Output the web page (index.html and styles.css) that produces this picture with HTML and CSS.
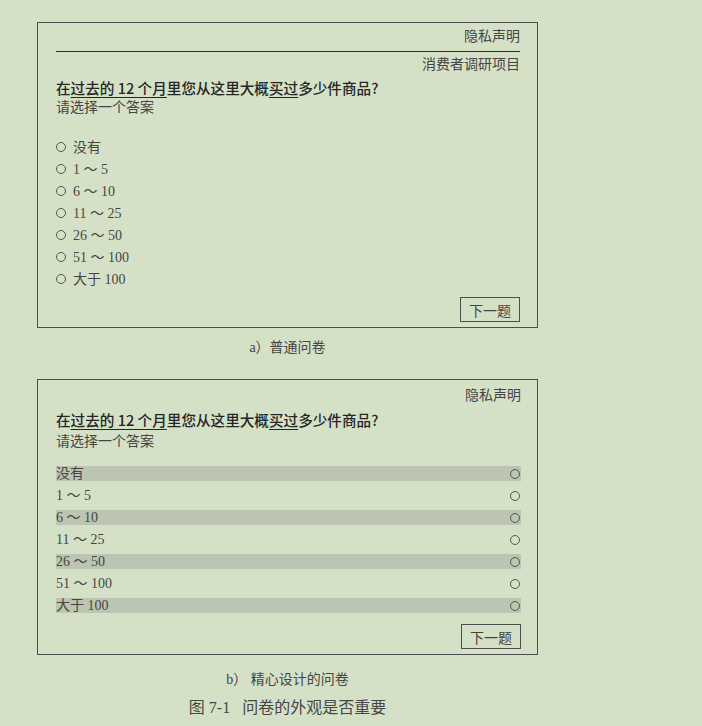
FILE: index.html
```html
<!DOCTYPE html>
<html lang="zh-CN">
<head>
<meta charset="utf-8">
<title>问卷的外观是否重要</title>
<link rel="stylesheet" href="styles.css">
</head>
<body>
<main class="page">
  <section class="survey survey-a">
    <div class="privacy">隐私声明</div>
    <div class="rule"></div>
    <div class="project">消费者调研项目</div>
    <div class="question">在<span class="ul">过去的 12 个月</span>里您从这里大概<span class="ul">买过</span>多少件商品?</div>
    <div class="hint">请选择一个答案</div>
    <ul class="options">
      <li><span class="radio"></span>没有</li>
      <li><span class="radio"></span>1 ～ 5</li>
      <li><span class="radio"></span>6 ～ 10</li>
      <li><span class="radio"></span>11 ～ 25</li>
      <li><span class="radio"></span>26 ～ 50</li>
      <li><span class="radio"></span>51 ～ 100</li>
      <li><span class="radio"></span>大于 100</li>
    </ul>
    <div class="actions"><span class="next">下一题</span></div>
  </section>
  <p class="caption caption-a">a）普通问卷</p>

  <section class="survey survey-b">
    <div class="privacy">隐私声明</div>
    <div class="question">在<span class="ul">过去的 12 个月</span>里您从这里大概<span class="ul">买过</span>多少件商品?</div>
    <div class="hint hint-b">请选择一个答案</div>
    <ul class="rows">
      <li class="band"><span>没有</span><span class="radio"></span></li>
      <li><span>1 ～ 5</span><span class="radio"></span></li>
      <li class="band"><span>6 ～ 10</span><span class="radio"></span></li>
      <li><span>11 ～ 25</span><span class="radio"></span></li>
      <li class="band"><span>26 ～ 50</span><span class="radio"></span></li>
      <li><span>51 ～ 100</span><span class="radio"></span></li>
      <li class="band"><span>大于 100</span><span class="radio"></span></li>
    </ul>
    <div class="actions actions-b"><span class="next">下一题</span></div>
  </section>
  <p class="caption caption-b">b）&nbsp;精心设计的问卷</p>
  <p class="figcap">图 7-1&nbsp;&nbsp;&nbsp;问卷的外观是否重要</p>
</main>
</body>
</html>
```

FILE: styles.css
```css
html, body {
  margin: 0;
  padding: 0;
  background: #d5e1c7;
}

body {
  font-family: "Liberation Serif", "Noto Sans CJK SC", serif;
  font-size: 14px;
  color: #454545;
}

.page {
  width: 501px;
  padding: 22px 0 0 37px;
}

.survey {
  box-sizing: border-box;
  width: 501px;
  border: 1px solid #4e4e4e;
  padding: 0 17px 5px 18px;
}

.privacy,
.project {
  text-align: right;
  line-height: 20px;
}

.survey-a .privacy { margin-top: 4px; }
.survey-b .privacy { margin-top: 6px; }

.rule {
  margin-top: 4px;
  border-top: 1px solid #2e2e2e;
}

.project { margin-top: 3px; }

.question {
  font-family: "Noto Sans CJK SC", sans-serif;
  font-weight: 500;
  font-size: 14.6px;
  line-height: 20px;
  color: #262626;
  margin-top: 3px;
}

.survey-b .question { margin-top: 4px; }

.ul {
  text-decoration: underline;
  text-decoration-thickness: 1px;
  text-underline-offset: 3px;
}

.hint { line-height: 20px; }
.hint-b { margin-top: 2px; }

.options {
  list-style: none;
  margin: 17px 0 0;
  padding: 0;
}

.options li {
  display: flex;
  align-items: center;
  height: 22px;
}

.radio {
  box-sizing: border-box;
  width: 10px;
  height: 10px;
  border: 1px solid #555;
  border-radius: 50%;
  flex: none;
}

.options .radio { margin: 1px 7px 0 0; }

.actions {
  display: flex;
  justify-content: flex-end;
  margin-top: 8px;
}

.actions-b { margin-top: 11px; }

.next {
  box-sizing: border-box;
  width: 60px;
  height: 25px;
  border: 1px solid #4e4e4e;
  display: flex;
  align-items: center;
  justify-content: center;
  color: #444;
}

.survey-b {
  margin-top: 21px;
  padding-right: 16px;
}

.rows {
  list-style: none;
  margin: 14px 0 0;
  padding: 0;
  display: flex;
  flex-direction: column;
  gap: 7px;
}

.rows li {
  display: flex;
  align-items: center;
  justify-content: space-between;
  height: 15px;
  line-height: 15px;
  padding-right: 1px;
}

.rows .band { background: #bcc4b2; }

.caption {
  margin: 10px 0 0;
  text-align: center;
  line-height: 20px;
}

.caption-b { margin-top: 15px; }

.figcap {
  margin: 7px 0 0;
  text-align: center;
  line-height: 22px;
  font-size: 16px;
}
```
